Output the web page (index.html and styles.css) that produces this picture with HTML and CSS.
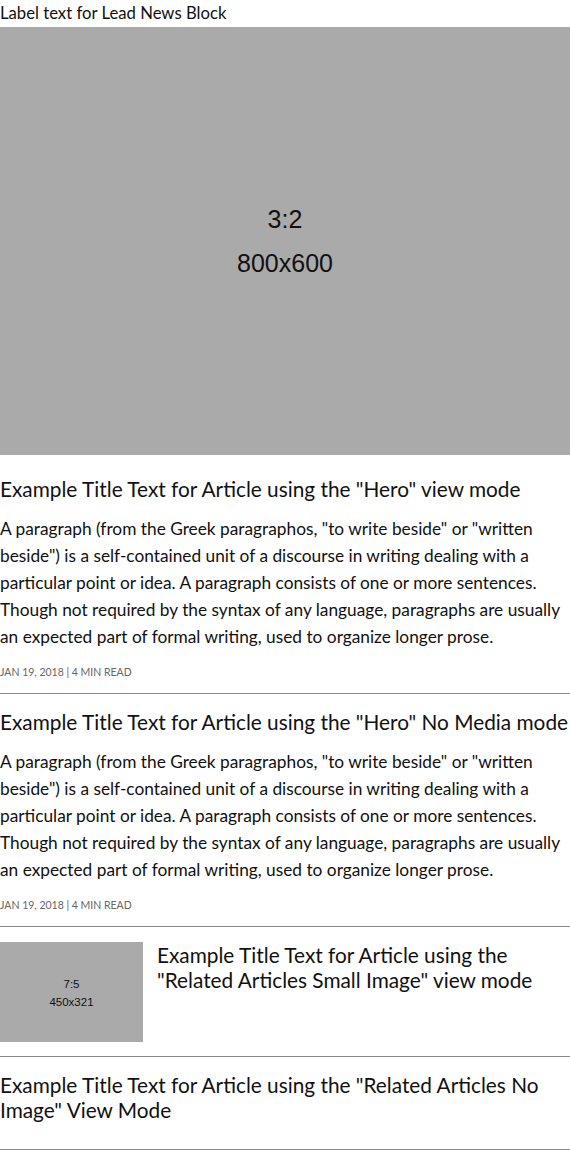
FILE: index.html
```html
<!DOCTYPE html>
<html lang="en">
<head>
<meta charset="utf-8">
<title>Lead News Block</title>
<link rel="stylesheet" href="styles.css">
</head>
<body>
<div class="block">
  <div class="block-label">Label text for Lead News Block</div>

  <article class="hero">
    <div class="ph ph-hero"><span>3:2</span><span>800x600</span></div>
    <div class="hero-body">
      <h2 class="title">Example Title Text for Article using the "Hero" view mode</h2>
      <p class="summary">A paragraph (from the Greek paragraphos, "to write beside" or "written beside") is a self-contained unit of a discourse in writing dealing with a particular point or idea. A paragraph consists of one or more sentences. Though not required by the syntax of any language, paragraphs are usually an expected part of formal writing, used to organize longer prose.</p>
      <div class="meta">JAN 19, 2018 | 4 MIN READ</div>
    </div>
  </article>

  <article class="hero hero-nomedia">
    <h2 class="title">Example Title Text for Article using the "Hero" No Media mode</h2>
    <p class="summary">A paragraph (from the Greek paragraphos, "to write beside" or "written beside") is a self-contained unit of a discourse in writing dealing with a particular point or idea. A paragraph consists of one or more sentences. Though not required by the syntax of any language, paragraphs are usually an expected part of formal writing, used to organize longer prose.</p>
    <div class="meta">JAN 19, 2018 | 4 MIN READ</div>
  </article>

  <article class="related">
    <div class="ph ph-small"><span>7:5</span><span>450x321</span></div>
    <h2 class="title">Example Title Text for Article using the "Related Articles Small Image" view mode</h2>
  </article>

  <article class="related related-noimage">
    <h2 class="title">Example Title Text for Article using the "Related Articles No Image" View Mode</h2>
  </article>
</div>
</body>
</html>
```

FILE: styles.css
```css
* { box-sizing: border-box; }

html, body {
  margin: 0;
  padding: 0;
  background: #fff;
}

body {
  font-family: "Lato", "Open Sans", "Liberation Sans", sans-serif;
  color: #111;
  width: 570px;
}

.block-label {
  font-size: 16.7px;
  line-height: 27px;
  height: 27px;
}

.ph {
  background: #aaaaaa;
  color: #111;
  font-family: "Liberation Sans", Arial, sans-serif;
  display: flex;
  flex-direction: column;
  align-items: center;
  justify-content: center;
}

.ph-hero {
  height: 428px;
  font-size: 25px;
  gap: 16px;
  line-height: 28px;
}

.ph-small {
  width: 143px;
  height: 100px;
  flex: none;
  font-size: 11.5px;
  line-height: 14px;
  gap: 4px;
  padding-top: 2px;
}

.title {
  margin: 0;
  font-weight: 400;
  font-size: 20.8px;
  line-height: 25px;
}

.summary {
  margin: 14px 0 0;
  font-size: 17.3px;
  line-height: 27px;
}

.meta {
  margin-top: 14px;
  font-size: 10.5px;
  line-height: 16px;
  color: #666;
}

.hero {
  border-bottom: 1px solid #888;
  padding-bottom: 13px;
}

.hero-body {
  padding-top: 21px;
}

.hero-nomedia {
  padding-top: 15px;
}

.related {
  display: flex;
  gap: 14px;
  padding: 15px 0 14px;
  border-bottom: 1px solid #888;
}

.related-noimage {
  padding: 15px 0 27px;
}
```
